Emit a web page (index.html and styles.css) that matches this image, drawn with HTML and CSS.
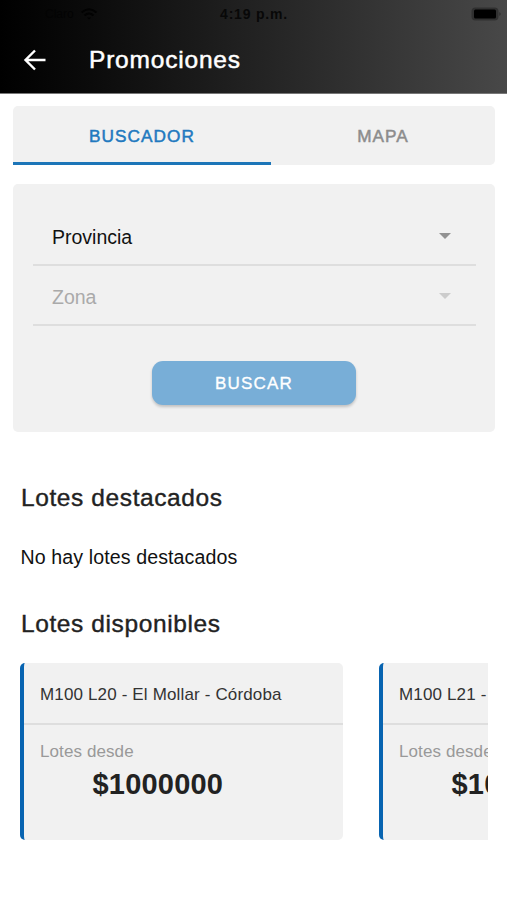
FILE: index.html
```html
<!DOCTYPE html>
<html lang="es">
<head>
<meta charset="utf-8">
<title>Promociones</title>
<link rel="stylesheet" href="styles.css">
</head>
<body>
<header class="header">
  <div class="status">
    <span class="signal"><span class="carrier">Claro</span>
      <svg width="18" height="12" viewBox="0 0 18 12" fill="none" stroke="#020202" stroke-width="2"><path d="M1.5 4.5Q9-2 16.5 4.5M4.5 7.5Q9 3.500 13.500 7.500"/><path d="M7 9.500h4L9 11.500z" fill="#020202" stroke="none"/></svg>
    </span>
    <span class="time">4:19 p.m.</span>
    <svg class="battery" width="32" height="14" viewBox="0 0 32 14"><rect x=".5" y=".5" width="27" height="13" rx="4" fill="#303030"/><rect x="3" y="2.500" width="22" height="9" rx="1.500" fill="#000"/><path d="M28.500 5q2 2 0 4z" fill="#242424"/></svg>
  </div>
  <div class="toolbar">
    <svg class="back" width="24" height="22" viewBox="0 0 24 22" fill="none" stroke="#fff" stroke-width="2.400"><path d="M22.500 11H3M12 1.500L2.500 11l9.500 9.500"/></svg>
    <h1 class="title">Promociones</h1>
  </div>
</header>
<main class="page">
  <nav class="tabs">
    <a class="tab active">BUSCADOR</a>
    <a class="tab">MAPA</a>
  </nav>
  <form class="search">
    <div class="field"><span>Provincia</span><i class="caret"></i></div>
    <div class="field disabled"><span>Zona</span><i class="caret"></i></div>
    <button class="submit" type="button">BUSCAR</button>
  </form>
  <section class="lots">
    <h2 class="heading">Lotes destacados</h2>
    <p class="empty">No hay lotes destacados</p>
    <h2 class="heading">Lotes disponibles</h2>
    <div class="slider">
      <article class="card">
        <h3 class="name">M100 L20 - El Mollar - Córdoba</h3>
        <p class="label">Lotes desde</p>
        <p class="price">$1000000</p>
      </article>
      <article class="card">
        <h3 class="name">M100 L21 - El Mollar - Córdoba</h3>
        <p class="label">Lotes desde</p>
        <p class="price">$1000000</p>
      </article>
    </div>
  </section>
</main>
</body>
</html>
```
FILE: styles.css
```css
* { box-sizing: border-box; margin: 0; padding: 0; }
body {
  width: 507px;
  height: 900px;
  overflow: hidden;
  background: #fff;
  color: #111;
  font-family: "Liberation Sans", Arial, sans-serif;
}
.header {
  height: 94px;
  background: linear-gradient(90deg, #000 0, #0b0b0b 18%, #222 50%, #484848 100%);
  border-bottom: 1px solid #777;
}
.status {
  display: grid;
  grid-template-columns: 1fr auto 1fr;
  align-items: center;
  height: 27px;
  padding: 0 4px 0 50px;
}
.signal { display: flex; align-items: center; gap: 5px; margin-left: -5px; }
.carrier { width: 30px; font-size: 12px; color: #030303; }
.time {
  margin-left: -45px;
  padding-top: 1px;
  font-size: 14px;
  font-weight: bold;
  letter-spacing: .8px;
  color: #080808;
}
.battery { justify-self: end; }
.toolbar { display: flex; align-items: center; height: 65px; padding-left: 23px; }
.title {
  margin-left: 42px;
  font-size: 24.5px;
  font-weight: normal;
  line-height: 28px;
  letter-spacing: .8px;
  color: #fff;
  -webkit-text-stroke: .5px #fff;
}
.page { padding: 12px 12px 0 13px; }
.tabs {
  display: grid;
  grid-template-columns: 258px 1fr;
  height: 59px;
  overflow: hidden;
  border-radius: 5px 5px 5px 0;
  background: #f1f1f1;
}
.tab {
  display: flex;
  justify-content: center;
  align-items: center;
  padding-top: 4px;
  border-bottom: 3px solid transparent;
  font-size: 17.2px;
  letter-spacing: 1.05px;
  color: #8c8c8c;
  -webkit-text-stroke: .5px currentColor;
}
.active { border-color: #1c75b8; color: #2179bf; }
.search {
  display: flex;
  flex-direction: column;
  height: 248px;
  margin-top: 19px;
  padding: 22px 19px 0 20px;
  border-radius: 5px;
  background: #f1f1f1;
}
.field {
  display: flex;
  justify-content: space-between;
  align-items: center;
  height: 60px;
  padding: 4px 25px 0 19px;
  border-bottom: 2px solid #dedede;
  font-size: 19.5px;
}
.caret {
  margin-top: -2px;
  border: 6px solid transparent;
  border-top-color: #929292;
  border-bottom: 0;
}
.disabled { color: #aaa; }
.disabled .caret { border-top-color: #ccc; }
.submit {
  align-self: center;
  width: 204px;
  height: 44px;
  margin: 35px 1px 0 0;
  padding-top: 1px;
  border: 0;
  border-radius: 11px;
  background: #78aed7;
  box-shadow: 0 2px 3px #0003;
  color: #fff;
  font-family: inherit;
  font-size: 17px;
  letter-spacing: 1.2px;
  -webkit-text-stroke: .35px #fff;
}
.lots { padding: 51px 7px 0 7px; }
.heading {
  padding-left: 1px;
  font-size: 24.5px;
  font-weight: normal;
  line-height: 30px;
  letter-spacing: .6px;
  color: #222;
  -webkit-text-stroke: .4px #222;
}
.empty { margin: 32px 0 39px; padding-left: .5px; font-size: 19.6px; line-height: 25px; letter-spacing: .1px; }
.slider { display: flex; gap: 36px; margin-top: 24px; overflow: hidden; }
.card {
  flex: 0 0 323px;
  height: 177px;
  border-left: 4px solid #0864b1;
  border-radius: 5px;
  background: #f1f1f1;
}
.name {
  height: 62px;
  padding-left: 16px;
  border-bottom: 2px solid #dedede;
  font-size: 17px;
  font-weight: normal;
  line-height: 63px;
  letter-spacing: .15px;
  color: #333;
}
.label {
  padding: 17px 0 0 16px;
  font-size: 17px;
  line-height: 20px;
  letter-spacing: .1px;
  color: #999;
}
.price {
  padding-left: 68.5px;
  font-size: 29px;
  font-weight: bold;
  line-height: 44px;
  letter-spacing: .2px;
  color: #222;
}
```
